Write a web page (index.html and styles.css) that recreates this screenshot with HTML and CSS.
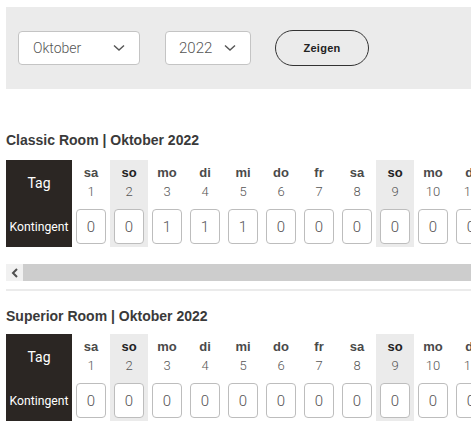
FILE: index.html
```html
<!DOCTYPE html>
<html lang="de">
<head>
<meta charset="utf-8">
<link rel="stylesheet" href="styles.css">
</head>
<body>
<div class="page">
  <div class="filter">
    <div class="select sel-month"><span>Oktober</span><svg class="chev" width="12" height="8" viewBox="0 0 12 8"><path d="M1 1.5 L6 6 L11 1.5" fill="none" stroke="#555" stroke-width="1.4"/></svg></div>
    <div class="select sel-year"><span>2022</span><svg class="chev" width="12" height="8" viewBox="0 0 12 8"><path d="M1 1.5 L6 6 L11 1.5" fill="none" stroke="#555" stroke-width="1.4"/></svg></div>
    <div class="btn">Zeigen</div>
  </div>

  <h2 class="title t1">Classic Room | Oktober 2022</h2>
  <div class="scroller">
    <div class="grid" id="g1"></div>
  </div>
  <div class="scrollbar"><div class="sb-btn"><svg width="8" height="10" viewBox="0 0 8 10"><path d="M6 1 L2 5 L6 9" fill="none" stroke="#505050" stroke-width="2"/></svg></div><div class="sb-thumb"></div></div>
  <div class="divider"></div>

  <h2 class="title t2">Superior Room | Oktober 2022</h2>
  <div class="scroller">
    <div class="grid" id="g2"></div>
  </div>
</div>
<script src="app.js"></script>
</body>
</html>
```
FILE: app.js
```js
(function(){
  var names=['sa','so','mo','di','mi','do','fr'];
  var v1=[0,0,1,1,1,0,0,0,0,0];
  function build(id, vals){
    var g=document.getElementById(id);
    var html='<div class="lab"><div class="lab-top">Tag</div><div class="lab-bot">Kontingent</div></div>';
    for(var d=1; d<=31; d++){
      var n=names[(d-1)%7];
      var sun=n==='so';
      var v=vals[d-1]||0;
      html+='<div class="col'+(sun?' sun':'')+'"><div class="head"><div class="dn">'+n+'</div><div class="num">'+d+'</div></div><div class="cell"><div class="inp">'+v+'</div></div></div>';
    }
    g.innerHTML=html;
  }
  build('g1', v1);
  build('g2', []);
})();
```
FILE: styles.css
```css
html, body { margin: 0; padding: 0; background: #fff; }
body { font-family: Roboto, "Liberation Sans", Arial, sans-serif; color: #444; overflow: hidden; }
.page { padding: 7px 0 0 6px; }

.filter {
  background: #ebebeb;
  height: 82px;
  box-sizing: border-box;
  padding: 24px 0 0 12px;
  display: flex;
  align-items: flex-start;
}
.select {
  height: 34px;
  box-sizing: border-box;
  background: #fff;
  border: 1px solid #c4c4c4;
  border-radius: 4px;
  display: flex;
  align-items: center;
  justify-content: space-between;
  color: #555;
  font-weight: 300;
}
.sel-month { width: 122px; padding: 0 14px 0 14px; font-size: 14px; }
.sel-year { width: 86px; margin-left: 25px; padding: 0 14px 0 13px; font-size: 15px; }
.chev { display: block; }
.btn {
  margin-left: 24px;
  margin-top: -1px;
  width: 94px;
  height: 36px;
  box-sizing: border-box;
  border: 1.5px solid #333;
  border-radius: 18px;
  display: flex;
  align-items: center;
  justify-content: center;
  font-family: "Liberation Sans", Arial, sans-serif;
  font-weight: 900;
  font-size: 11px;
  color: #222;
  letter-spacing: 0.3px;
}

.title {
  margin: 0;
  font-family: "Liberation Sans", Arial, sans-serif;
  font-weight: bold;
  font-size: 14px;
  color: #3a3a3a;
  line-height: 18px;
}
.t1 { margin-top: 42px; margin-bottom: 11px; }
.t2 { margin-top: 16px; margin-bottom: 9px; }

.scroller { overflow: hidden; }
.grid { display: flex; width: max-content; }
.lab {
  width: 66px;
  background: #2b2623;
  color: #fff;
  font-weight: 400;
  display: flex;
  flex-direction: column;
}
.lab-top { height: 46px; display: flex; align-items: center; justify-content: center; font-size: 14px; padding-bottom: 1px; box-sizing: border-box; }
.lab-bot { height: 41px; display: flex; align-items: center; justify-content: center; font-size: 12.2px; }

.col { width: 38px; display: flex; flex-direction: column; }
.col.sun { background: #ebebeb; }
.head { height: 46px; text-align: center; }
.dn { font-family: "Liberation Sans", Arial, sans-serif; font-weight: bold; font-size: 13px; color: #4a4a4a; line-height: 14px; padding-top: 6px; }
.sun .dn { color: #222; }
.num { font-size: 13px; font-weight: 300; color: #555; line-height: 14px; padding-top: 5px; }
.cell { height: 41px; display: flex; align-items: flex-start; justify-content: center; padding-top: 3px; box-sizing: border-box; }
.inp {
  width: 30px;
  height: 35px;
  box-sizing: border-box;
  background: #fff;
  border: 1px solid #bdbdbd;
  border-radius: 4px;
  display: flex;
  align-items: center;
  justify-content: center;
  font-size: 15px;
  font-weight: 300;
  color: #555;
}

.scrollbar { margin-top: 17px; height: 17px; display: flex; }
.sb-btn { width: 17px; background: #f1f1f1; display: flex; align-items: center; justify-content: center; }
.sb-thumb { flex: 1; background: #cdcdcd; }
.divider { margin-top: 8px; height: 2px; background: #ebebeb; }
```
